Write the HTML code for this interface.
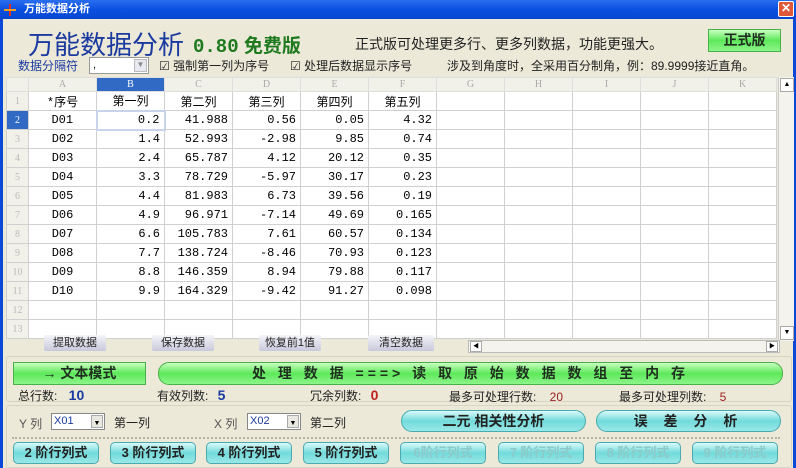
<!DOCTYPE html>
<html><head><meta charset="utf-8"><style>
*{margin:0;padding:0;box-sizing:border-box}
body{width:796px;height:468px;overflow:hidden;background:#0a49d8;font-family:"Liberation Sans","Noto Sans CJK SC",sans-serif;position:relative}
.abs{position:absolute}
#title{left:0;top:0;width:796px;height:19px;background:linear-gradient(#2a6df0,#0a50e0 50%,#0846d0);color:#fff;font-size:11px;font-weight:bold;line-height:19px;padding-left:24px}
#close{right:2px;top:1px;width:16px;height:16px;background:#e0583a;border:1px solid #fff;border-radius:2px;color:#fff;font-size:12px;line-height:13px;text-align:center;font-weight:bold}
#body{left:3px;top:19px;width:790px;height:449px;background:#ece9d8}
.t{position:absolute;white-space:nowrap}
.grid{left:6px;top:77px;border-collapse:collapse;table-layout:fixed;font-family:"Liberation Mono","Noto Sans CJK SC",monospace;font-size:12px}
.grid td{border:1px solid #d0d0d0;height:19px;padding:0 4px;background:#fff;overflow:hidden;white-space:nowrap}
.grid tr.h td{height:14px;background:#f1f0e9;color:#aaa;text-align:center;font-size:10px;font-family:"Liberation Serif",serif;border-color:#dedede}
.grid td.n{background:#f1f0e9;color:#bbb;font-size:10px;text-align:center;padding:0;font-family:"Liberation Serif",serif}
.grid td.r{text-align:right}
.grid td.c{text-align:center}
.btn1{position:absolute;height:16px;top:335px;background:linear-gradient(#f4f4f8,#c8c8dc);border-radius:2px;font-size:11px;text-align:center;line-height:16px;color:#222}
.gb{position:absolute;background:linear-gradient(#c8ffc0,#5ee85a 50%,#8cf58a);border:1px solid #4ab04a;font-weight:bold;color:#203020;text-align:center}
.cb{position:absolute;background:linear-gradient(#dafafa,#72dada 50%,#9ae8e8);border:1px solid #4aaab0;font-weight:bold;text-align:center;border-radius:5px;font-size:13px;height:22px;line-height:20px;top:442px;width:86px;color:#222}
.cb.dis{color:#8ccaca}
</style></head><body>
<div id="title" class="abs">万能数据分析</div>
<div class="abs" style="left:4px;top:4px;width:12px;height:12px"><div class="abs" style="left:5px;top:0;width:2px;height:12px;background:#e03020"></div><div class="abs" style="left:0;top:5px;width:12px;height:2px;background:#f0a020"></div></div>
<div id="close" class="abs">✕</div>
<div id="body" class="abs"></div>

<div class="t" style="left:28px;top:25px;font-size:26px;color:#1a3aa0">万能数据分析</div>
<div class="t" style="left:193px;top:31px;font-size:19px;color:#1f7a1f;font-weight:bold"><span style="font-family:'Liberation Mono',monospace">0.80</span> 免费版</div>
<div class="t" style="left:355px;top:34px;font-size:14px;color:#222">正式版可处理更多行、更多列数据，功能更强大。</div>
<div class="gb" style="left:708px;top:29px;width:73px;height:23px;line-height:21px;font-size:14px">正式版</div>

<div class="t" style="left:18px;top:57px;font-size:12px;color:#1a3aa0">数据分隔符</div>
<div class="abs" style="left:89px;top:57px;width:60px;height:17px;background:#fff;border:1px solid #999"><span class="abs" style="left:44px;top:1px;width:13px;height:13px;background:#e8e8f0;border:1px solid #bbb;font-size:8px;text-align:center;color:#888">▼</span><span class="abs" style="left:3px;top:1px;font-size:11px">,</span></div>
<div class="t" style="left:159px;top:57px;font-size:12px;color:#222">☑ 强制第一列为序号</div>
<div class="t" style="left:290px;top:57px;font-size:12px;color:#222">☑ 处理后数据显示序号</div>
<div class="t" style="left:447px;top:57px;font-size:12px;color:#222">涉及到角度时，全采用百分制角，例：89.9999接近直角。</div>

<table class="grid abs">
<colgroup><col style="width:22px"><col style="width:68px"><col style="width:68px"><col style="width:68px"><col style="width:68px"><col style="width:68px"><col style="width:68px"><col style="width:68px"><col style="width:68px"><col style="width:68px"><col style="width:68px"><col style="width:68px"></colgroup>
<tr class="h"><td></td><td>A</td><td style="background:#316ac5;color:#fff">B</td><td>C</td><td>D</td><td>E</td><td>F</td><td>G</td><td>H</td><td>I</td><td>J</td><td>K</td></tr>
<tr><td class="n">1</td><td class="c">*序号</td><td class="c">第一列</td><td class="c">第二列</td><td class="c">第三列</td><td class="c">第四列</td><td class="c">第五列</td><td></td><td></td><td></td><td></td><td></td></tr>
<tr><td class="n" style="background:#316ac5;color:#fff">2</td><td class="c">D01</td><td class="r" style="border:2px solid #c8d4ea">0.2</td><td class="r">41.988</td><td class="r">0.56</td><td class="r">0.05</td><td class="r">4.32</td><td></td><td></td><td></td><td></td><td></td></tr>
<tr><td class="n">3</td><td class="c">D02</td><td class="r">1.4</td><td class="r">52.993</td><td class="r">-2.98</td><td class="r">9.85</td><td class="r">0.74</td><td></td><td></td><td></td><td></td><td></td></tr>
<tr><td class="n">4</td><td class="c">D03</td><td class="r">2.4</td><td class="r">65.787</td><td class="r">4.12</td><td class="r">20.12</td><td class="r">0.35</td><td></td><td></td><td></td><td></td><td></td></tr>
<tr><td class="n">5</td><td class="c">D04</td><td class="r">3.3</td><td class="r">78.729</td><td class="r">-5.97</td><td class="r">30.17</td><td class="r">0.23</td><td></td><td></td><td></td><td></td><td></td></tr>
<tr><td class="n">6</td><td class="c">D05</td><td class="r">4.4</td><td class="r">81.983</td><td class="r">6.73</td><td class="r">39.56</td><td class="r">0.19</td><td></td><td></td><td></td><td></td><td></td></tr>
<tr><td class="n">7</td><td class="c">D06</td><td class="r">4.9</td><td class="r">96.971</td><td class="r">-7.14</td><td class="r">49.69</td><td class="r">0.165</td><td></td><td></td><td></td><td></td><td></td></tr>
<tr><td class="n">8</td><td class="c">D07</td><td class="r">6.6</td><td class="r">105.783</td><td class="r">7.61</td><td class="r">60.57</td><td class="r">0.134</td><td></td><td></td><td></td><td></td><td></td></tr>
<tr><td class="n">9</td><td class="c">D08</td><td class="r">7.7</td><td class="r">138.724</td><td class="r">-8.46</td><td class="r">70.93</td><td class="r">0.123</td><td></td><td></td><td></td><td></td><td></td></tr>
<tr><td class="n">10</td><td class="c">D09</td><td class="r">8.8</td><td class="r">146.359</td><td class="r">8.94</td><td class="r">79.88</td><td class="r">0.117</td><td></td><td></td><td></td><td></td><td></td></tr>
<tr><td class="n">11</td><td class="c">D10</td><td class="r">9.9</td><td class="r">164.329</td><td class="r">-9.42</td><td class="r">91.27</td><td class="r">0.098</td><td></td><td></td><td></td><td></td><td></td></tr>
<tr><td class="n">12</td><td></td><td></td><td></td><td></td><td></td><td></td><td></td><td></td><td></td><td></td><td></td></tr>
<tr><td class="n">13</td><td></td><td></td><td></td><td></td><td></td><td></td><td></td><td></td><td></td><td></td><td></td></tr>
</table>
<div class="abs" style="left:778px;top:77px;width:16px;height:264px;background:#f4f3ee;border-left:1px solid #ccc"><div class="abs" style="left:1px;top:1px;width:14px;height:14px;background:#fff;border:1px solid #aaa;font-size:7px;text-align:center;line-height:12px">▲</div><div class="abs" style="left:1px;bottom:1px;width:14px;height:14px;background:#fff;border:1px solid #aaa;font-size:7px;text-align:center;line-height:12px">▼</div></div>

<div class="btn1" style="left:44px;width:62px">提取数据</div>
<div class="btn1" style="left:152px;width:62px">保存数据</div>
<div class="btn1" style="left:259px;width:62px">恢复前1值</div>
<div class="btn1" style="left:368px;width:66px">清空数据</div>
<div class="abs" style="left:468px;top:340px;width:312px;height:13px;background:#f4f3ee;border:1px solid #bbb"><div class="abs" style="left:1px;top:0;width:12px;height:11px;background:#fff;border:1px solid #aaa;font-size:6px;text-align:center;line-height:10px">◀</div><div class="abs" style="right:1px;top:0;width:12px;height:11px;background:#fff;border:1px solid #aaa;font-size:6px;text-align:center;line-height:10px">▶</div></div>

<div class="abs" style="left:6px;top:356px;width:786px;height:46px;border:1px solid #d8d4c4;border-radius:3px"></div>
<div class="gb" style="left:13px;top:362px;width:133px;height:23px;line-height:21px;font-size:14px">→ 文本模式</div>
<div class="gb" style="left:158px;top:362px;width:625px;height:23px;line-height:21px;font-size:14px;border-radius:11px;letter-spacing:4px">处 理 数 据 ===&gt; 读 取 原 始 数 据 数 组 至 内 存</div>
<div class="t" style="left:18px;top:387px;font-size:12px;color:#222">总行数: <span style="color:#1a3aa0;font-size:14px;font-weight:bold;margin-left:8px">10</span></div>
<div class="t" style="left:157px;top:387px;font-size:12px;color:#222">有效列数: <span style="color:#1a3aa0;font-size:14px;font-weight:bold;margin-left:6px">5</span></div>
<div class="t" style="left:310px;top:387px;font-size:12px;color:#222">冗余列数: <span style="color:#c02020;font-size:14px;font-weight:bold;margin-left:6px">0</span></div>
<div class="t" style="left:449px;top:388px;font-size:12px;color:#222">最多可处理行数: <span style="color:#a02020;margin-left:10px">20</span></div>
<div class="t" style="left:619px;top:388px;font-size:12px;color:#222">最多可处理列数: <span style="color:#a02020;margin-left:10px">5</span></div>

<div class="abs" style="left:6px;top:405px;width:786px;height:63px;border:1px solid #d8d4c4;border-radius:3px"></div>
<div class="t" style="left:19px;top:415px;font-size:12px;color:#555">Y 列</div>
<div class="abs" style="left:51px;top:413px;width:54px;height:17px;background:#fff;border:1px solid #888;font-size:11px;color:#1a3aa0;padding-left:2px;line-height:15px">X01<span class="abs" style="right:1px;top:1px;width:12px;height:13px;background:#e8e8e0;border:1px solid #aaa;font-size:7px;text-align:center;color:#000">▼</span></div>
<div class="t" style="left:114px;top:414px;font-size:12px;color:#222">第一列</div>
<div class="t" style="left:214px;top:415px;font-size:12px;color:#555">X 列</div>
<div class="abs" style="left:247px;top:413px;width:54px;height:17px;background:#fff;border:1px solid #888;font-size:11px;color:#1a3aa0;padding-left:2px;line-height:15px">X02<span class="abs" style="right:1px;top:1px;width:12px;height:13px;background:#e8e8e0;border:1px solid #aaa;font-size:7px;text-align:center;color:#000">▼</span></div>
<div class="t" style="left:310px;top:414px;font-size:12px;color:#222">第二列</div>
<div class="cb" style="left:401px;top:410px;width:185px;border-radius:11px;font-size:14px">二元 相关性分析</div>
<div class="cb" style="left:596px;top:410px;width:185px;border-radius:11px;font-size:14px;letter-spacing:6px">误 差 分 析</div>
<div class="abs" style="left:12px;top:437px;width:768px;border-top:2px dotted #b8b4a4"></div>
<div class="cb" style="left:13px">2 阶行列式</div>
<div class="cb" style="left:110px">3 阶行列式</div>
<div class="cb" style="left:206px">4 阶行列式</div>
<div class="cb" style="left:303px">5 阶行列式</div>
<div class="cb dis" style="left:400px">6阶行列式</div>
<div class="cb dis" style="left:498px">7 阶行列式</div>
<div class="cb dis" style="left:595px">8 阶行列式</div>
<div class="cb dis" style="left:692px">9 阶行列式</div>
</body></html>
